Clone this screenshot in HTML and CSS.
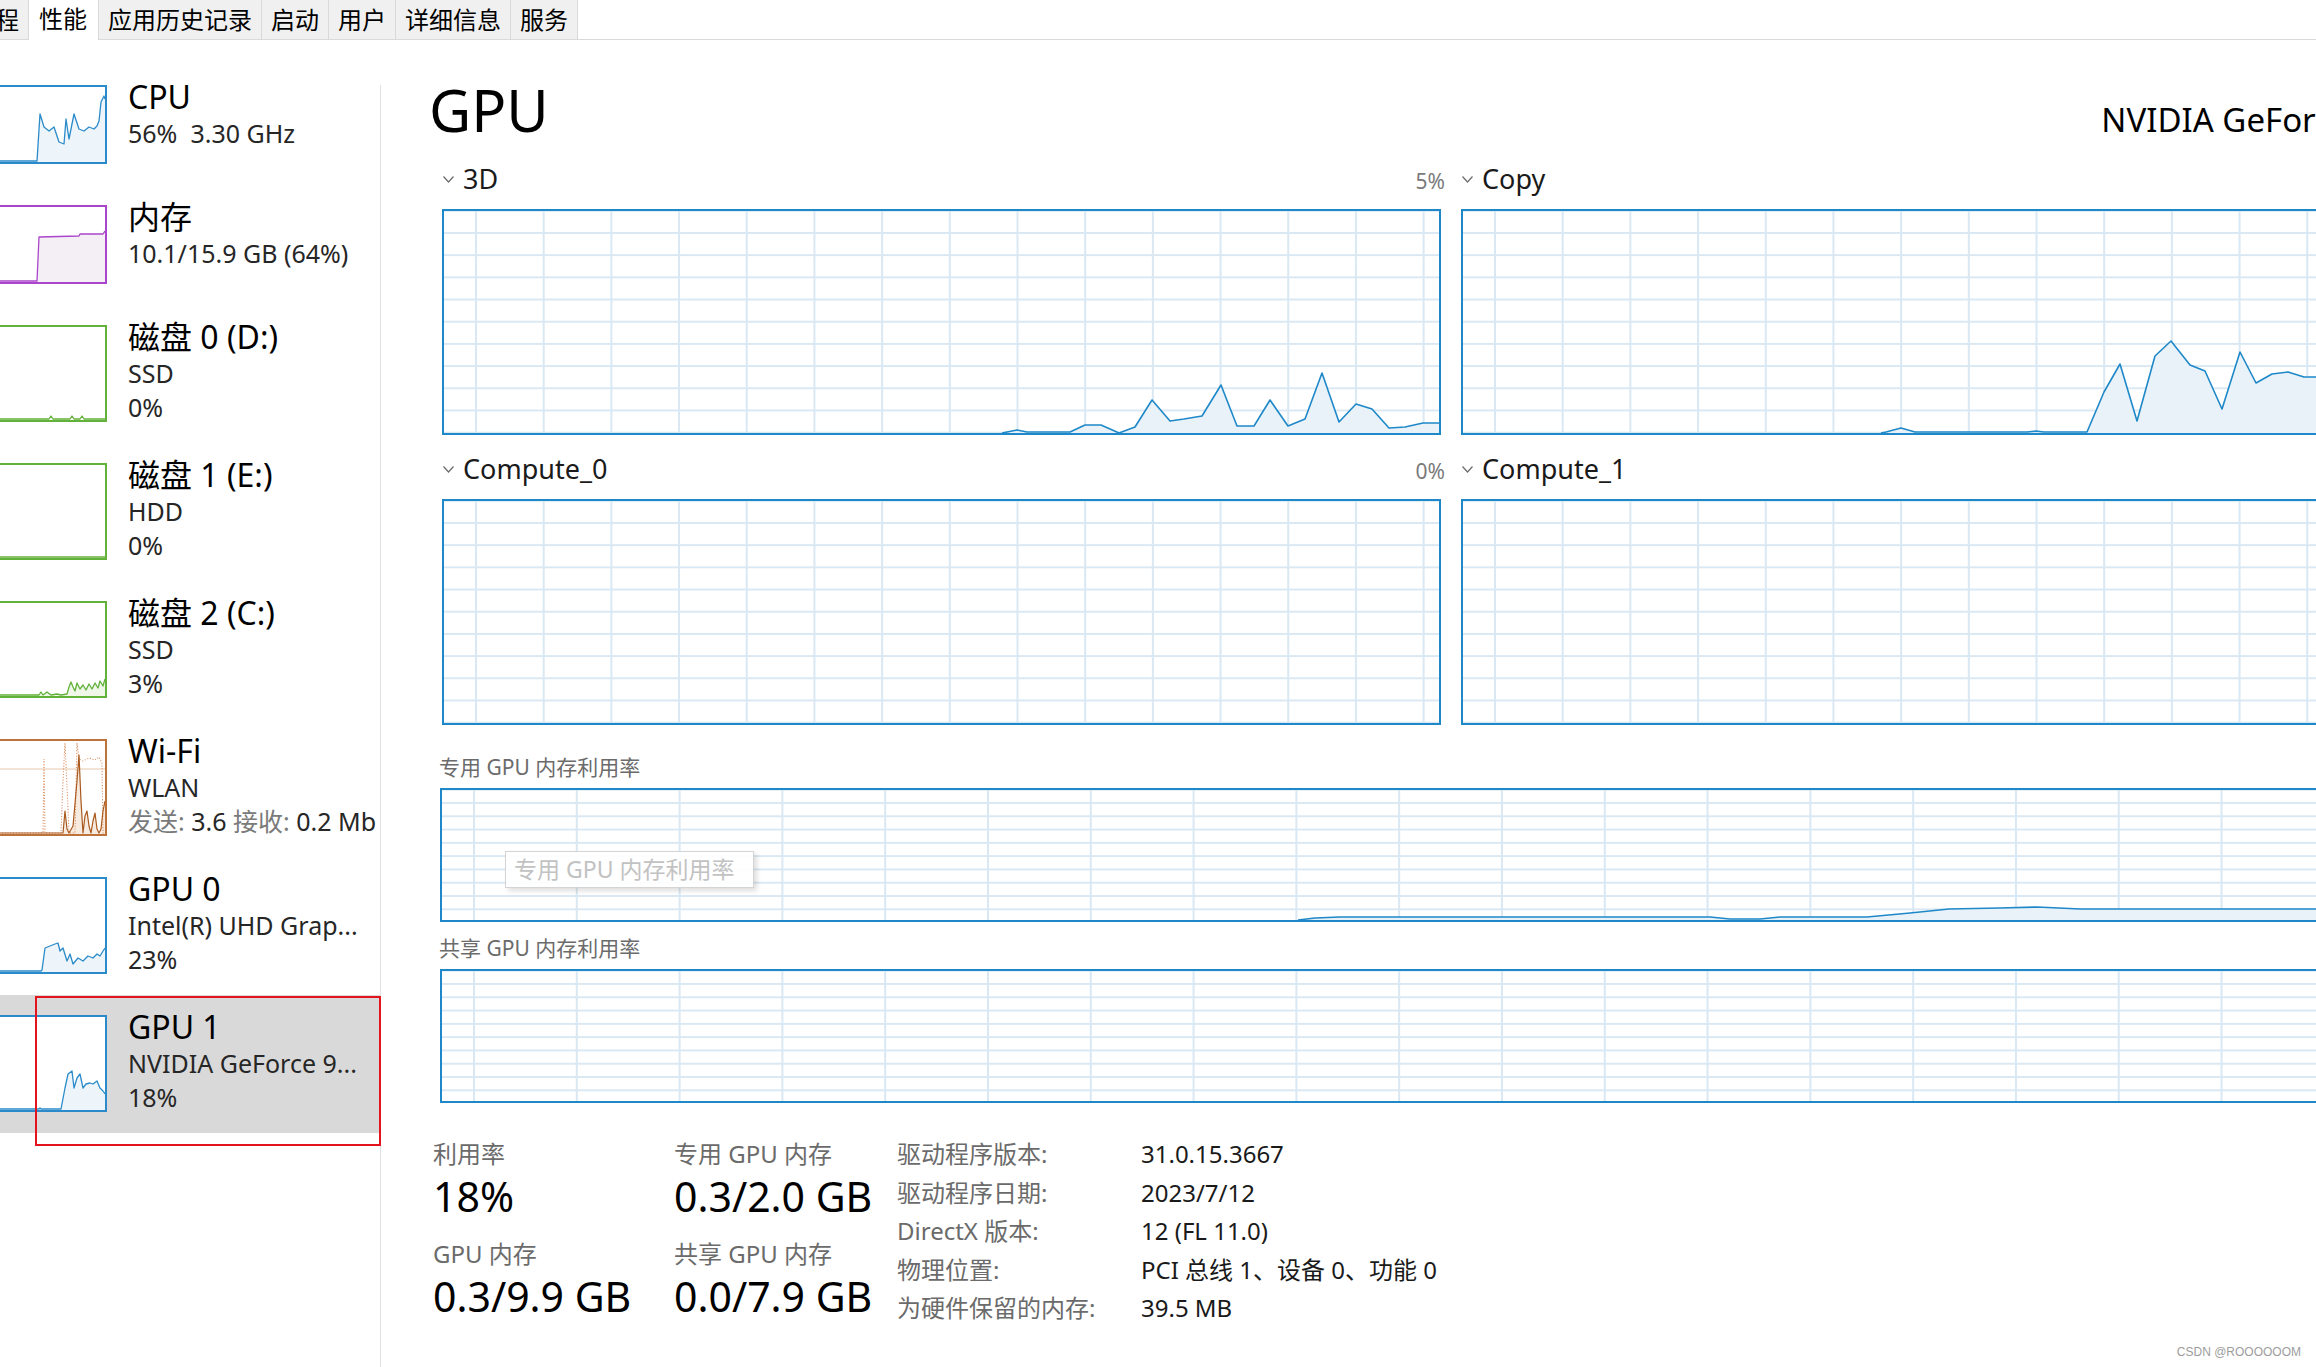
FILE: index.html
```html
<!DOCTYPE html>
<html lang="zh-CN">
<head>
<meta charset="utf-8">
<title>任务管理器 - 性能</title>
<link rel="stylesheet" href="styles.css">
</head>
<body>
<div class="app">
  <nav class="tabs">
    <div class="tab tab-cut">程</div>
    <div class="tab active">性能</div>
    <div class="tab">应用历史记录</div>
    <div class="tab">启动</div>
    <div class="tab">用户</div>
    <div class="tab">详细信息</div>
    <div class="tab">服务</div>
  </nav>

  <div class="content">
    <aside class="sidebar">
      <div class="item">
        <div class="thumb c-blue">
          <svg viewBox="0 0 106 75" preserveAspectRatio="none">
            <polygon class="area" points="0,75 38,75 41,27 45,40 50,44 55,40 60,55 65,57 67,32 70,52 75,27 80,42 85,44 90,40 95,42 98,39 100,34 102,15 105,9 106,12 106,75"/>
            <polyline class="ln" points="0,74 38,74 41,27 45,40 50,44 55,40 60,55 65,57 67,32 70,52 75,27 80,42 85,44 90,40 95,42 98,39 100,34 102,15 105,9 106,12"/>
          </svg>
        </div>
        <div class="info">
          <div class="title">CPU</div>
          <div class="sub">56%&nbsp; 3.30 GHz</div>
        </div>
      </div>

      <div class="item">
        <div class="thumb c-purple">
          <svg viewBox="0 0 106 75" preserveAspectRatio="none">
            <polygon class="area" points="0,75 38,75 40,30 80,29 81,27 104,27 106,24 106,75"/>
            <polyline class="ln" points="0,74 38,74 40,30 80,29 81,27 104,27 106,24"/>
          </svg>
        </div>
        <div class="info">
          <div class="title">内存</div>
          <div class="sub">10.1/15.9 GB (64%)</div>
        </div>
      </div>

      <div class="item tall">
        <div class="thumb tall c-green">
          <svg viewBox="0 0 106 93" preserveAspectRatio="none">
            <polyline class="ln" points="0,92 50,92 52,89 54,92 71,92 73,89 75,92 81,92 83,89 85,92 106,92"/>
          </svg>
        </div>
        <div class="info">
          <div class="title">磁盘 0 (D:)</div>
          <div class="sub">SSD</div>
          <div class="sub">0%</div>
        </div>
      </div>

      <div class="item tall">
        <div class="thumb tall c-green">
          <svg viewBox="0 0 106 93" preserveAspectRatio="none">
            <polyline class="ln" points="0,92 106,92"/>
          </svg>
        </div>
        <div class="info">
          <div class="title">磁盘 1 (E:)</div>
          <div class="sub">HDD</div>
          <div class="sub">0%</div>
        </div>
      </div>

      <div class="item tall">
        <div class="thumb tall c-green">
          <svg viewBox="0 0 106 93" preserveAspectRatio="none">
            <polygon class="area" points="0,93 40,92 42,89 44,92 48,89 52,92 58,91 62,92 68,91 70,84 72,79 74,84 76,88 78,80 81,86 84,82 87,87 90,81 93,86 96,80 99,85 101,78 104,83 106,76 106,93"/>
            <polyline class="ln" points="0,92 40,92 42,89 44,92 48,89 52,92 58,91 62,92 68,91 70,84 72,79 74,84 76,88 78,80 81,86 84,82 87,87 90,81 93,86 96,80 99,85 101,78 104,83 106,76"/>
          </svg>
        </div>
        <div class="info">
          <div class="title">磁盘 2 (C:)</div>
          <div class="sub">SSD</div>
          <div class="sub">3%</div>
        </div>
      </div>

      <div class="item tall">
        <div class="thumb tall c-orange">
          <svg viewBox="0 0 106 93" preserveAspectRatio="none">
            <line class="hl" x1="0" y1="28" x2="106" y2="28"/>
            <polygon class="area" points="64,93 66,70 68,88 70,92 74,85 78,40 80,14 82,60 84,92 86,75 88,70 90,85 92,92 94,80 96,72 98,88 100,92 102,88 104,70 106,60 106,93"/>
            <polyline class="dots" points="0,92 44,92 45,18 46,92 62,92 64,40 66,2 68,45 70,92 76,92 78,2 80,18 84,20 90,17 96,19 100,16 103,22 104,92 106,92"/>
            <polyline class="ln" points="0,92 64,92 66,70 68,88 70,92 74,85 78,40 80,14 82,60 84,92 86,75 88,70 90,85 92,92 94,80 96,72 98,88 100,92 102,88 104,70 106,60"/>
          </svg>
        </div>
        <div class="info">
          <div class="title">Wi-Fi</div>
          <div class="sub">WLAN</div>
          <div class="sub"><span class="dim">发送:</span> 3.6 <span class="dim">接收:</span> 0.2 Mb</div>
        </div>
      </div>

      <div class="item tall">
        <div class="thumb tall c-blue">
          <svg viewBox="0 0 106 93" preserveAspectRatio="none">
            <polygon class="area" points="0,93 42,93 43,91 46,69 51,67 56,65 59,64 61,72 64,69 68,82 71,75 74,85 79,79 84,82 89,77 94,79 98,75 101,77 104,72 106,69 106,93"/>
            <polyline class="ln" points="0,92 42,92 43,91 46,69 51,67 56,65 59,64 61,72 64,69 68,82 71,75 74,85 79,79 84,82 89,77 94,79 98,75 101,77 104,72 106,69"/>
          </svg>
        </div>
        <div class="info">
          <div class="title">GPU 0</div>
          <div class="sub">Intel(R) UHD Grap...</div>
          <div class="sub">23%</div>
        </div>
      </div>

      <div class="item tall selected">
        <div class="thumb tall c-blue">
          <svg viewBox="0 0 106 93" preserveAspectRatio="none">
            <polygon class="area" points="0,93 62,93 66,71 69,57 73,54 75,71 78,61 81,57 84,71 87,67 91,66 94,67 98,64 101,71 104,74 106,77 106,93"/>
            <polyline class="ln" points="0,92 40,92 41,91 42,92 62,92 66,71 69,57 73,54 75,71 78,61 81,57 84,71 87,67 91,66 94,67 98,64 101,71 104,74 106,77"/>
          </svg>
        </div>
        <div class="info">
          <div class="title">GPU 1</div>
          <div class="sub">NVIDIA GeForce 9...</div>
          <div class="sub">18%</div>
        </div>
        <div class="redbox"></div>
      </div>
    </aside>

    <div class="divider"></div>

    <main class="main">
      <div class="title-row">
        <div class="gpu-title">GPU</div>
        <div class="gpu-name">NVIDIA GeForce 940MX</div>
      </div>

      <div class="graphs">
        <section class="graph">
          <div class="ghead">
            <span class="gname"><svg class="chev" viewBox="0 0 11 7"><polyline points="0.5,0.5 5.5,6 10.5,0.5"/></svg>3D</span>
            <span class="gpct">5%</span>
          </div>
          <div class="gbox">
            <svg viewBox="2 2 995 222" preserveAspectRatio="none">
              <polygon class="area" points="565,224 575,221 585,224 628,224 643,216 659,216 677,224 693,218 710,191 728,212 742,210 760,207 779,176 795,217 812,217 828,191 846,217 863,210 880,164 897,213 914,195 930,200 947,219 963,218 981,214 997,214 997,224"/>
              <polyline class="ln" points="560,224 565,223 575,221 585,223 628,223 643,216 659,216 677,224 693,218 710,191 728,212 742,210 760,207 779,176 795,217 812,217 828,191 846,217 863,210 880,164 897,213 914,195 930,200 947,219 963,218 981,214 997,214"/>
            </svg>
          </div>
        </section>

        <section class="graph">
          <div class="ghead">
            <span class="gname"><svg class="chev" viewBox="0 0 11 7"><polyline points="0.5,0.5 5.5,6 10.5,0.5"/></svg>Copy</span>
            <span class="gpct"></span>
          </div>
          <div class="gbox">
            <svg viewBox="2 2 995 222" preserveAspectRatio="none">
              <polygon class="area" points="425,224 440,219 454,224 626,224 643,183 659,155 676,212 694,147 710,132 729,156 744,162 761,200 779,143 795,174 811,165 827,163 843,168 860,168 880,172 900,170 920,175 940,168 960,172 997,170 997,224"/>
              <polyline class="ln" points="420,224 425,223 440,219 454,223 566,223 575,222 583,223 626,223 643,183 659,155 676,212 694,147 710,132 729,156 744,162 761,200 779,143 795,174 811,165 827,163 843,168 860,168 880,172 900,170 920,175 940,168 960,172 997,170"/>
            </svg>
          </div>
        </section>

        <section class="graph">
          <div class="ghead">
            <span class="gname"><svg class="chev" viewBox="0 0 11 7"><polyline points="0.5,0.5 5.5,6 10.5,0.5"/></svg>Compute_0</span>
            <span class="gpct">0%</span>
          </div>
          <div class="gbox"></div>
        </section>

        <section class="graph">
          <div class="ghead">
            <span class="gname"><svg class="chev" viewBox="0 0 11 7"><polyline points="0.5,0.5 5.5,6 10.5,0.5"/></svg>Compute_1</span>
            <span class="gpct"></span>
          </div>
          <div class="gbox"></div>
        </section>
      </div>

      <div class="mlabel">专用 GPU 内存利用率</div>
      <div class="mbox">
        <svg viewBox="2 2 2014 130" preserveAspectRatio="none">
          <polygon class="area" points="858,132 875,130 900,129 1270,129 1290,131 1320,131 1340,129 1427,129 1470,125 1509,121 1560,120 1597,119 1640,121 2016,121 2016,132"/>
          <polyline class="ln" points="858,132 875,130 900,129 1270,129 1290,131 1320,131 1340,129 1427,129 1470,125 1509,121 1560,120 1597,119 1640,121 2016,121"/>
        </svg>
        <div class="ghost">专用 GPU 内存利用率</div>
      </div>

      <div class="mlabel second">共享 GPU 内存利用率</div>
      <div class="mbox"></div>

      <div class="stats">
        <div class="stat-grid">
          <div class="stat">
            <div class="stat-label">利用率</div>
            <div class="stat-value">18%</div>
          </div>
          <div class="stat">
            <div class="stat-label">专用 GPU 内存</div>
            <div class="stat-value">0.3/2.0 GB</div>
          </div>
          <div class="stat">
            <div class="stat-label">GPU 内存</div>
            <div class="stat-value">0.3/9.9 GB</div>
          </div>
          <div class="stat">
            <div class="stat-label">共享 GPU 内存</div>
            <div class="stat-value">0.0/7.9 GB</div>
          </div>
        </div>
        <div class="props">
          <div class="prop-k">驱动程序版本:</div><div class="prop-v">31.0.15.3667</div>
          <div class="prop-k">驱动程序日期:</div><div class="prop-v">2023/7/12</div>
          <div class="prop-k">DirectX 版本:</div><div class="prop-v">12 (FL 11.0)</div>
          <div class="prop-k">物理位置:</div><div class="prop-v">PCI 总线 1、设备 0、功能 0</div>
          <div class="prop-k">为硬件保留的内存:</div><div class="prop-v">39.5 MB</div>
        </div>
      </div>
    </main>
  </div>

  <div class="watermark">CSDN @ROOOOOOM</div>
</div>
</body>
</html>
```

FILE: styles.css
```css
html, body {
  margin: 0;
  padding: 0;
}

body {
  width: 2316px;
  height: 1367px;
  overflow: hidden;
  background: #ffffff;
  color: #000000;
  font-family: "Noto Sans", "Noto Sans CJK SC", sans-serif;
}

.app {
  position: relative;
  width: 2316px;
  height: 1367px;
  overflow: hidden;
}

/* ---------- tabs ---------- */
.tabs {
  display: flex;
  height: 40px;
  box-sizing: border-box;
  border-bottom: 1px solid #d9d9d9;
}

.tab {
  flex: none;
  height: 39px;
  font-size: 24px;
  line-height: 39px;
  padding: 0 9px;
  background: #f0f0f0;
  border-left: 1px solid #d9d9d9;
  border-right: 1px solid #d9d9d9;
  margin-left: -1px;
  white-space: nowrap;
  color: #000;
}

.tab-cut {
  margin-left: -15px;
}

.tab.active {
  position: relative;
  z-index: 1;
  height: 40px;
  line-height: 37px;
  padding: 0 11px 0 10px;
  background: #ffffff;
}

/* ---------- layout ---------- */
.content {
  display: flex;
  height: 1327px;
}

.sidebar {
  flex: none;
  width: 380px;
  padding-top: 25px;
  box-sizing: border-box;
}

.divider {
  flex: none;
  width: 1px;
  margin-top: 45px;
  background: #e2e2e2;
}

.main {
  flex: none;
  width: 2018px;
  padding: 40px 0 0 61px;
}

/* ---------- sidebar items ---------- */
.item {
  position: relative;
  display: flex;
  height: 120px;
  box-sizing: border-box;
  padding-top: 20px;
}

.item.tall {
  height: 138px;
}

.item.selected {
  background: #d9d9d9;
}

.thumb {
  flex: none;
  width: 110px;
  height: 79px;
  margin-left: -3px;
  border: 2px solid;
  box-sizing: border-box;
  background: #ffffff;
}

.thumb.tall {
  height: 97px;
}

.thumb svg {
  display: block;
  width: 100%;
  height: 100%;
}

.thumb .ln {
  fill: none;
  stroke-width: 1.3;
  stroke-linejoin: round;
}

.c-blue { border-color: #2b8bca; }
.c-blue .ln { stroke: #2b8bca; }
.c-blue .area { fill: #edf4fa; }

.c-purple { border-color: #ab45cb; }
.c-purple .ln { stroke: #ab45cb; }
.c-purple .area { fill: #f3eff5; }

.c-green { border-color: #62b13a; }
.c-green .ln { stroke: #62b13a; }
.c-green .area { fill: #eef7e8; }

.c-orange { border-color: #bd733a; }
.c-orange .ln { stroke: #a9591d; stroke-width: 1.2; }
.c-orange .area { fill: #f7ebe0; }
.c-orange .hl { stroke: #e6c6aa; stroke-width: 1; }
.c-orange .dots {
  fill: none;
  stroke: #dc9063;
  stroke-width: 1.1;
  stroke-dasharray: 1.1 1.7;
}

.info {
  margin-left: 21px;
  margin-top: -7px;
  min-width: 0;
  flex: 1;
}

.title {
  font-size: 32px;
  line-height: 38px;
  white-space: nowrap;
  color: #000;
}

.sub {
  font-size: 25px;
  line-height: 34px;
  white-space: nowrap;
  color: #262626;
}

.dim {
  color: #7a7a7a;
}

.redbox {
  position: absolute;
  left: 35px;
  top: 1px;
  width: 346px;
  height: 150px;
  box-sizing: border-box;
  border: 2px solid #e3141c;
  z-index: 2;
}

/* ---------- main header ---------- */
.title-row {
  display: flex;
  justify-content: space-between;
  align-items: baseline;
  height: 60px;
}

.gpu-title {
  font-size: 58px;
  line-height: 60px;
  margin-left: -13px;
  color: #000;
}

.gpu-name {
  font-size: 33px;
  line-height: 40px;
  margin-right: -4px;
  white-space: nowrap;
  color: #000;
}

/* ---------- graphs ---------- */
.graphs {
  display: grid;
  grid-template-columns: 999px 999px;
  column-gap: 20px;
  row-gap: 19px;
  margin-top: 24px;
}

.ghead {
  display: flex;
  justify-content: space-between;
  align-items: baseline;
  height: 30px;
}

.gname {
  font-size: 27px;
  line-height: 30px;
  color: #1a1a1a;
  white-space: nowrap;
}

.chev {
  width: 11px;
  height: 7px;
  margin-left: 1px;
  margin-right: 9px;
  vertical-align: 6px;
}

.chev polyline {
  fill: none;
  stroke: #6a6a6a;
  stroke-width: 1.2;
}

.gpct {
  font-size: 21px;
  line-height: 30px;
  color: #7a7a7a;
  margin-right: -4px;
}

.gbox,
.mbox {
  position: relative;
  box-sizing: border-box;
  border: 2px solid #1e88c8;
  background-color: #ffffff;
}

.gbox {
  margin-top: 15px;
  height: 226px;
  background-image:
    linear-gradient(to right, #d9e8f3 2px, transparent 2px),
    linear-gradient(to bottom, #d9e8f3 2px, transparent 2px);
  background-size: 67.7px 100%, 100% 22.2px;
  background-position: 31px 0, 0 21px;
}

.mbox {
  margin-top: 9px;
  margin-left: -2px;
  width: 2018px;
  height: 134px;
  background-image:
    linear-gradient(to right, #d9e8f3 2px, transparent 2px),
    linear-gradient(to bottom, #d9e8f3 2px, transparent 2px);
  background-size: 102.8px 100%, 100% 13.3px;
  background-position: 31px 0, 0 12px;
}

.gbox svg,
.mbox svg {
  display: block;
  width: 100%;
  height: 100%;
}

.gbox .ln,
.mbox .ln {
  fill: none;
  stroke: #1e88c8;
  stroke-width: 1.6;
  stroke-linejoin: round;
}

.gbox .area,
.mbox .area {
  fill: #eaf2f9;
}

.ghost {
  position: absolute;
  left: 63px;
  top: 61px;
  width: 249px;
  height: 37px;
  box-sizing: border-box;
  padding-left: 8px;
  border: 1px solid #d4d4d4;
  background: rgba(255, 255, 255, 0.88);
  box-shadow: 3px 3px 5px rgba(0, 0, 0, 0.13);
  font-size: 23px;
  line-height: 35px;
  color: #c2c2c2;
  white-space: nowrap;
  overflow: visible;
}

.mlabel {
  margin-top: 30px;
  margin-left: -3px;
  font-size: 21px;
  line-height: 24px;
  color: #6b6b6b;
}

.mlabel.second {
  margin-top: 14px;
}

/* ---------- stats ---------- */
.stats {
  display: flex;
  align-items: flex-start;
  margin-top: 37px;
}

.stat-grid {
  display: grid;
  grid-template-columns: 241px 223px;
  row-gap: 21px;
  margin-left: -9px;
}

.stat-label {
  font-size: 24px;
  line-height: 28px;
  color: #6b6b6b;
  white-space: nowrap;
}

.stat-value {
  margin-top: 5px;
  font-size: 41px;
  line-height: 46px;
  color: #000;
  white-space: nowrap;
}

.props {
  display: grid;
  grid-template-columns: 244px auto;
  margin-top: -5px;
  font-size: 24px;
  line-height: 38.5px;
  white-space: nowrap;
}

.prop-k {
  color: #6b6b6b;
}

.prop-v {
  color: #1a1a1a;
}

/* ---------- watermark ---------- */
.watermark {
  position: absolute;
  right: 15px;
  bottom: 8px;
  font-family: "Liberation Sans", Arial, sans-serif;
  font-size: 12px;
  color: #9d9d9d;
}
```
